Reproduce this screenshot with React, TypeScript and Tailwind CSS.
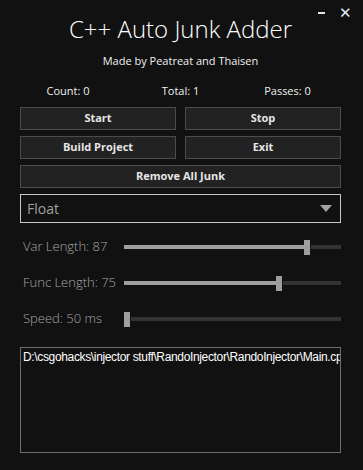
import { useState } from "react";

const sans = "font-['Open_Sans',sans-serif]";

type SliderProps = {
  label: string;
  fill: string;
};

const Slider = ({ label, fill }: SliderProps) => (
  <div className="flex h-[36px] items-center pl-[3px]">
    <span className={`w-[101px] text-[13px] font-light text-[#a6a6a6] ${sans}`}>{label}</span>
    <div className="flex h-[15px] flex-1 items-center">
      <div className={`h-[4px] bg-[#9e9e9e] ${fill}`} />
      <div className="h-[15px] w-[6px] bg-[#9e9e9e]" />
      <div className="ml-[1px] h-[4px] flex-1 bg-[#333333]" />
    </div>
  </div>
);

const Button = ({ children }: { children: string }) => (
  <button
    className={`h-[23px] border border-[#4c4c4c] bg-[#222222] text-[11px] font-bold text-[#e6e6e6] ${sans}`}
  >
    {children}
  </button>
);

const App = () => {
  const [mode] = useState("Float");

  return (
    <div className="relative h-[470px] w-[363px] overflow-hidden bg-[#111111]">
      <div className={`absolute right-[11px] top-[1px] flex items-center gap-[14px] text-[15px] text-[#e8eef8] ${sans}`}>
        <span className="mt-[2px] block h-[2px] w-[7px] bg-[#dfe6f0]" />
        <span>✕</span>
      </div>

      <div className="flex flex-col pl-[20px] pr-[22px]">
        <h1 className={`mt-[13px] text-center text-[24px] leading-[31px] font-light text-white ${sans}`}>
          C++ Auto Junk Adder
        </h1>
        <p className={`mt-[9px] text-center text-[11px] leading-[16px] text-[#f0f0f0] ${sans}`}>
          Made by Peatreat and Thaisen
        </p>

        <div className={`mt-[14px] grid grid-cols-3 text-center text-[11px] leading-[16px] text-[#f0f0f0] ${sans}`}>
          <span className="pr-[11px]">Count: 0</span>
          <span>Total: 1</span>
          <span>Passes: 0</span>
        </div>

        <div className="mt-[8px] grid grid-cols-2 gap-x-[9px] gap-y-[6px]">
          <Button>Start</Button>
          <Button>Stop</Button>
          <Button>Build Project</Button>
          <Button>Exit</Button>
        </div>
        <div className="mt-[6px] grid">
          <Button>Remove All Junk</Button>
        </div>

        <div className="mt-[6px] flex h-[29px] items-center justify-between border border-[#c8c8c8] pl-[6px] pr-[8px]">
          <span className={`text-[14px] text-[#a0a0a0] ${sans}`}>{mode}</span>
          <svg width="12" height="7" viewBox="0 0 12 7">
            <path d="M0 0 H12 L6 7 Z" fill="#a3a3a3" />
          </svg>
        </div>

        <div className="mt-[6px] flex flex-col">
          <Slider label="Var Length: 87" fill="w-[180px]" />
          <Slider label="Func Length: 75" fill="w-[152px]" />
          <Slider label="Speed: 50 ms" fill="w-0" />
        </div>

        <div className="mt-[10px] h-[106px] overflow-hidden border border-[#6e6e6e] px-[2px] pt-[1px]">
          <p className="whitespace-nowrap font-['Liberation_Sans',Arial,sans-serif] text-[12px] leading-[16px] tracking-[-0.35px] text-white">
            D:\csgohacks\injector stuff\RandoInjector\RandoInjector\Main.cpp
          </p>
        </div>
      </div>
    </div>
  );
};

export default App;
